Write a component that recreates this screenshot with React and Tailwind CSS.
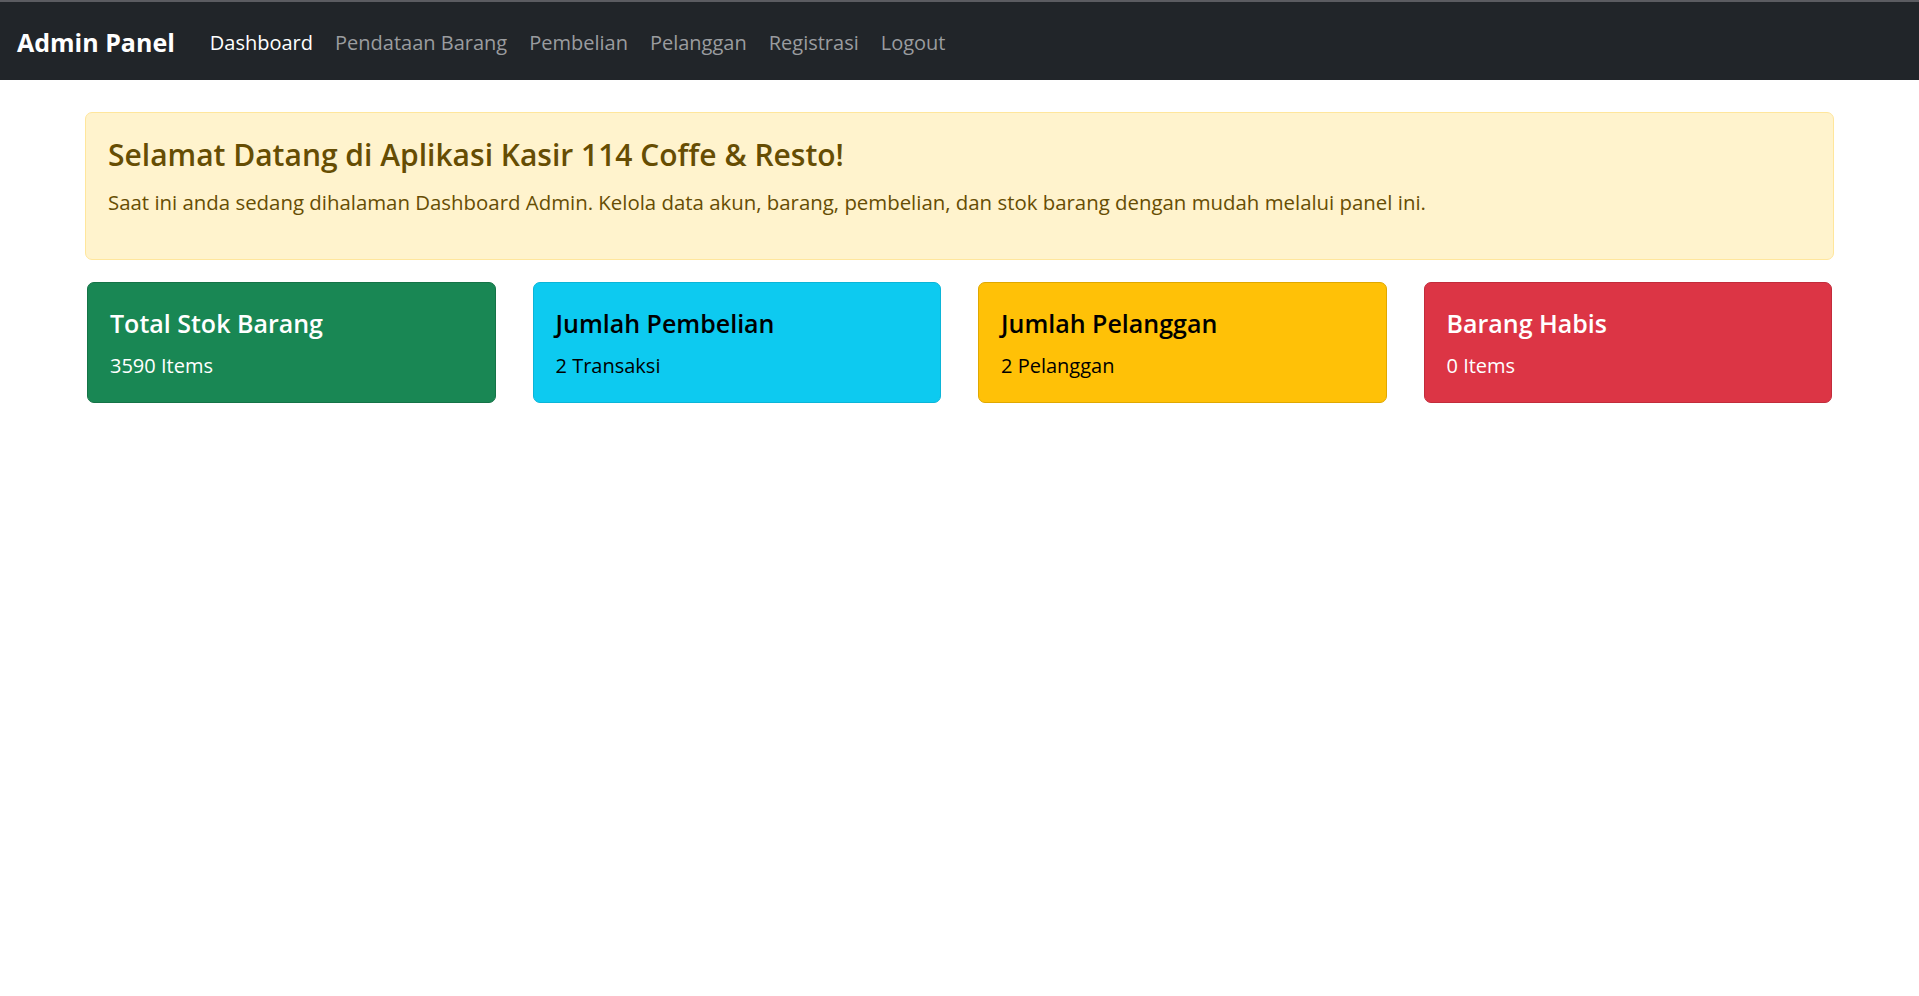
const navLinks = ['Pendataan Barang', 'Pembelian', 'Pelanggan', 'Registrasi', 'Logout'];

const stats = [
  { title: 'Total Stok Barang', value: '3590 Items', box: 'bg-[#198754] border-[#157347] text-white' },
  { title: 'Jumlah Pembelian', value: '2 Transaksi', box: 'bg-[#0dcaf0] border-[#0bb5d8] text-black' },
  { title: 'Jumlah Pelanggan', value: '2 Pelanggan', box: 'bg-[#ffc107] border-[#e0a800] text-black' },
  { title: 'Barang Habis', value: '0 Items', box: 'bg-[#dc3545] border-[#c22c3b] text-white' },
];

export default function App() {
  return (
    <div className="min-h-screen bg-white font-['Open_Sans','Noto_Sans',sans-serif]">
      {/* Navbar */}
      <nav className="h-[80px] border-t-2 border-[#5b5c61] bg-[#212529] flex items-center px-[17px] pt-[4px]">
        <span className="text-white font-bold text-[25px] mr-[24px]">Admin Panel</span>
        <a className="px-[11px] text-[20px] text-white">Dashboard</a>
        {navLinks.map((l) => (
          <a key={l} className="px-[11px] text-[20px] text-[#9a9c9f]">
            {l}
          </a>
        ))}
      </nav>

      <main className="px-[85px] pt-[32px]">
        {/* Welcome alert */}
        <div className="h-[148px] rounded-[7px] border border-[#ffe69c] bg-[#fff3cd] text-[#664d03] px-[22px] pt-[20px]">
          <h4 className="text-[30px] font-semibold leading-[36px] mt-[4px] mb-[14px]">
            Selamat Datang di Aplikasi Kasir 114 Coffe &amp; Resto!
          </h4>
          <p className="text-[20.4px] leading-[30px]">
            Saat ini anda sedang dihalaman Dashboard Admin. Kelola data akun, barang, pembelian, dan stok barang dengan mudah melalui panel ini.
          </p>
        </div>

        {/* Stat cards */}
        <div className="grid grid-cols-4 gap-[37px] mt-[22px] px-[2px]">
          {stats.map((s) => (
            <div key={s.title} className={`h-[121px] rounded-[7px] border px-[22px] pt-[25px] ${s.box}`}>
              <h5 className="text-[25px] font-semibold leading-[30px] mb-[13px]">{s.title}</h5>
              <p className="text-[20px] leading-[30px]">{s.value}</p>
            </div>
          ))}
        </div>
      </main>
    </div>
  );
}
